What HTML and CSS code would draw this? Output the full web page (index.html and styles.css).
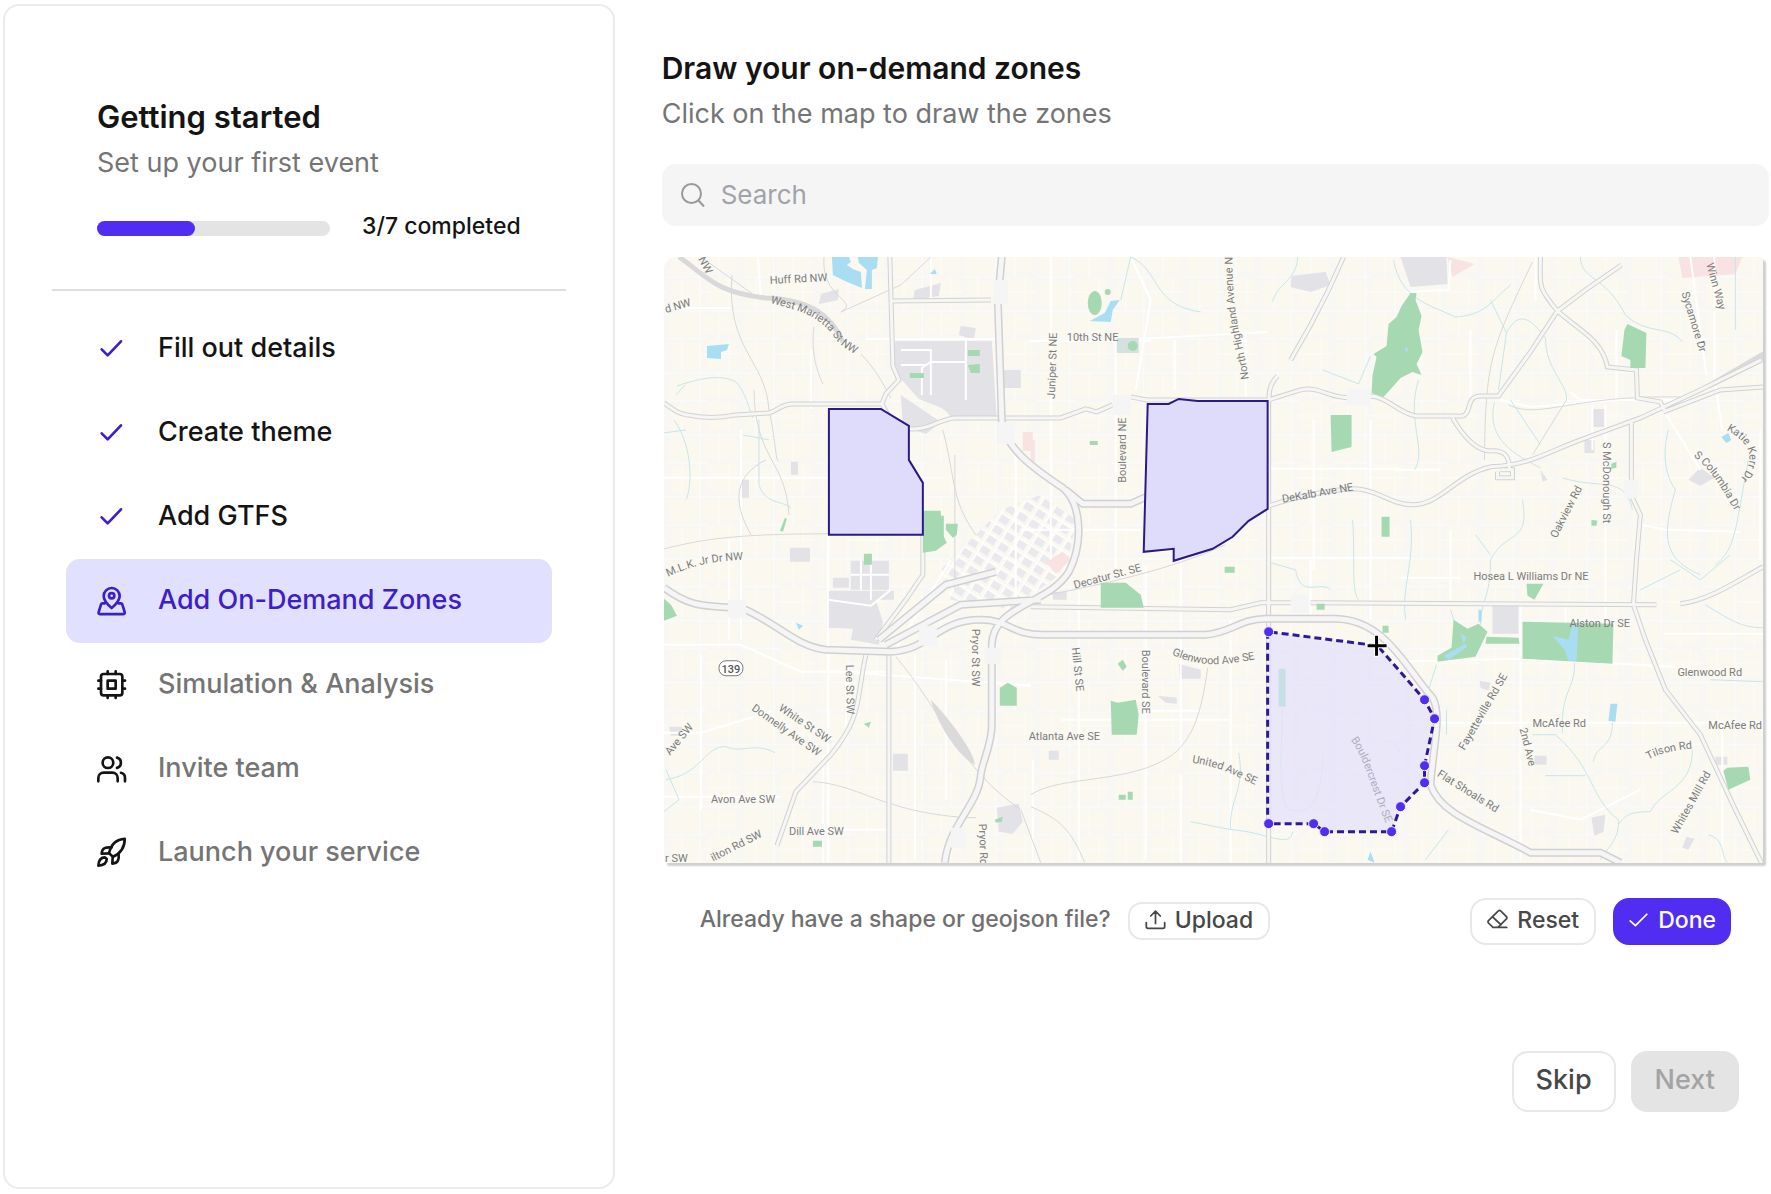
FILE: index.html
```html
<!DOCTYPE html>
<html lang="en">
<head>
<meta charset="utf-8">
<meta name="viewport" content="width=device-width, initial-scale=1">
<title>Getting started</title>
<link rel="stylesheet" href="styles.css">
</head>
<body>
<div class="page">
  <aside class="sidebar">
    <header class="intro">
      <h2 class="title">Getting started</h2>
      <p class="subtitle">Set up your first event</p>
      <div class="progress">
        <div class="progress-track" role="progressbar" aria-labelledby="progress-label" aria-valuemin="0" aria-valuemax="7" aria-valuenow="3"><div class="progress-fill" style="width: 42%"></div></div>
        <span class="progress-label" id="progress-label">3/7 completed</span>
      </div>
    </header>
    <hr class="divider">
    <nav class="steps" aria-label="Setup steps">
      <a class="step done" href="#details"><svg class="icon" viewBox="0 0 24 24"><path d="M5 13 9.500 17.500 19.500 7"/></svg>Fill out details</a>
      <a class="step done" href="#theme"><svg class="icon" viewBox="0 0 24 24"><path d="M5 13 9.500 17.500 19.500 7"/></svg>Create theme</a>
      <a class="step done" href="#gtfs"><svg class="icon" viewBox="0 0 24 24"><path d="M5 13 9.500 17.500 19.500 7"/></svg>Add GTFS</a>
      <a class="step active" href="#zones" aria-current="step"><svg class="icon" viewBox="0 0 24 24"><path d="M12.500 18C9.500 15.500 6.500 12.500 6.500 9a6 6 0 0 1 12 0C18.500 12.500 15.500 15.500 12.500 18Z"/><circle cx="12.500" cy="8.800" r="2"/><path d="M7.500 14.500H5.500a1 1 0 0 0-.9.6L2.700 21.200a1 1 0 0 0 1 1.400h17.600a1 1 0 0 0 1-1.400L20.400 15.100a1 1 0 0 0-.9-.6H17.500"/></svg>Add On-Demand Zones</a>
      <a class="step" href="#simulation"><svg class="icon" viewBox="0 0 24 24"><rect x="4.500" y="4.500" width="16" height="16" rx="2"/><path d="M9.500 9.500h6v6h-6zM9.500 2.500v2M15.500 2.500v2M9.500 20.500v2M15.500 20.500v2M20.500 9.500h2M20.500 15.500h2M2.500 9.500h2M2.500 15.500h2"/></svg>Simulation &amp; Analysis</a>
      <a class="step" href="#team"><svg class="icon" viewBox="0 0 24 24"><path d="M17 22v-2.500a4 4 0 0 0-4-4H6.500a4 4 0 0 0-4 4V22"/><circle cx="9.700" cy="8" r="4"/><path d="M22.500 22v-2.500a4 4 0 0 0-3-3.900M16.500 4.200a4 4 0 0 1 0 7.700"/></svg>Invite team</a>
      <a class="step" href="#launch"><svg class="icon" viewBox="0 0 24 24"><path d="M10.500 13C12 6.500 16 2.500 22.300 2.200 22.300 8 19 13 13.500 15.500Z"/><path d="M10.500 13 5 13.300c.1-2 .8-3.500 2.200-4.200 1.500-.7 3.500-.7 5.300-.5M13.300 15.500 13 20.700c2-.1 3.500-.8 4.200-2.200.7-1.500.7-3.500.5-5.200M7.500 16C4.500 16 2.700 18.500 2.500 22.200 6.200 22 8.800 20.300 8.800 17.300Z"/></svg>Launch your service</a>
    </nav>
  </aside>

  <main class="content">
    <h1 class="title">Draw your on-demand zones</h1>
    <p class="subtitle">Click on the map to draw the zones</p>
    <label class="search">
      <svg class="search-icon" viewBox="0 0 24 24"><circle cx="10.500" cy="10.500" r="9.500"/><path d="m17.500 17.500 5.500 6"/></svg>
      <input class="search-input" type="search" placeholder="Search" aria-label="Search">
    </label>

    <div class="map">
      <svg class="map-canvas" viewBox="663 257 1100 606" role="img" aria-label="Map of on-demand zones">
        <defs>
          <pattern id="blocks" width="74" height="62" patternUnits="userSpaceOnUse">
            <path class="block" d="M3 3h28v24H3zM36 4h34v20H36zM4 33h30v26H4zM40 30h30v28H40z"/>
            <path class="lane" d="M0 1h74M33 0v62M0 29h40M52 0v29M15 29v33M33 44h41M62 29v33"/>
          </pattern>
          <pattern id="downtown" width="14" height="12" patternUnits="userSpaceOnUse" patternTransform="rotate(32)">
            <path fill="#e9e9ee" d="M2 2h9v7H2z"/><path stroke="#fff" stroke-width="2" d="M0 0h14M0 0v12"/>
          </pattern>
          <path id="roads" d="M663 403C672 409 675 413 686 415C705 419 720 418 735 415L768 413C778 410 780 404 792 404H881L885 394 898 380 892 366 889 257M881 404C888 418 895 428 910 429C930 430 940 418 955 418H1060L1085 409 1096 412 1112 405M1130 397 1146 400H1268L1300 390C1320 386 1326 398 1350 398L1372 396C1388 398 1396 412 1415 416H1455C1475 420 1462 396 1480 396H1498L1530 352 1557 311 1585 290 1621 265M889 301 990 300M1343 257 1328 290 1310 325 1290 360M1277 376C1268 385 1269 392 1268 400V863M1540 257C1540 285 1536 286 1557 311C1578 330 1602 340 1607 367L1636 370 1637 398 1660 402 1664 410M1452 418C1462 435 1475 451 1490 451C1506 450 1509 458 1509 470M1268 506C1300 496 1330 490 1355 489C1378 490 1388 504 1412 505C1440 505 1455 475 1490 467C1530 465 1545 453 1580 440L1640 418 1700 390 1761 360M1631 420V480M1632 498 1640 515 1636 560 1633 605 1645 640 1665 690 1700 735 1735 810 1762 865M1663 412 1720 390 1763 387M1030 607 1230 610 1260 603H1290M1310 603 1656 605M1680 604C1710 600 1735 582 1763 567M922 520V575L905 600 875 640M888 652V863M865 655C855 700 862 716 830 755L795 792 776 846M1500 470H1512V478H1497V472"/>
          <path id="freeways" d="M663 588C685 604 695 607 740 608C775 622 795 647 825 650L890 652C930 650 935 620 980 620C1010 620 1010 636 1045 635H1205C1230 633 1240 619 1265 619H1335C1385 620 1405 668 1432 698C1442 715 1432 750 1430 785C1440 815 1480 826 1530 853H1600L1620 863M1001 257 997 300 1001 420C1003 448 1035 470 1062 488C1082 505 1082 545 1068 572C1048 605 992 605 991 645V725C991 745 982 760 980 775C978 805 948 825 944 863M878 640 945 585 995 572M885 645 960 605 1040 600M1065 490 1082 504 1130 504 1150 495"/>
          <path id="marietta" d="M769 303C805 312 820 318 834 338Q842 349 860 357"/>
          <path id="mlk" d="M667 577C690 566 710 561 745 560"/>
          <path id="highland" d="M1248 379C1245 350 1230 320 1232 250"/>
          <path id="katie" d="M1726 430C1752 444 1758 462 1734 486"/>
          <path id="columbia" d="M1693 456C1716 475 1720 488 1740 520"/>
          <path id="glenwood" d="M1171 655C1198 666 1215 668 1262 658"/>
          <path id="united" d="M1191 763C1225 768 1235 777 1265 790"/>
          <path id="boulder" d="M1350 740C1366 762 1370 790 1389 832"/>
          <path id="tilson" d="M1648 760Q1664 751 1692 749"/>
        </defs>

        <rect x="663" y="257" width="1100" height="606" fill="#f8f7f3"/>
        <rect x="663" y="257" width="1100" height="606" fill="url(#blocks)"/>
        <path fill="url(#downtown)" d="M1000 510 1040 495 1075 520 1066 570 1010 610 950 600 940 570Z"/>

        <g class="built">
          <path d="M894 341H991L996 418H950C945 405 925 404 917 398L894 372ZM900 395 940 422 925 434 902 426ZM827 591H893V600H875L882 622 878 645 850 640 852 629 827 628ZM850 561H888V590H850ZM832 578H848V588H832ZM789 548H809V562H789ZM820 294 838 289 837 300 818 304ZM914 290 940 283 938 296 912 300ZM960 326 975 328 973 340 958 335ZM1291 276 1325 272 1330 285 1310 292 1290 287ZM1400 257H1446L1447 284 1410 287ZM1492 606H1518V634H1492ZM1592 409H1604V427H1592ZM1584 440H1594V453H1584ZM1700 468 1714 478 1700 486 1688 480ZM1540 470 1547 480 1542 482ZM892 754H907V771H892ZM1178 664 1200 670V679H1179ZM1157 696 1176 698V704L1165 703ZM1048 751H1058V760H1048ZM1591 818 1605 815 1603 832 1594 836ZM1686 837 1694 839 1688 850 1682 848ZM790 462H797V475H790ZM740 480H748V498H740ZM668 727H681V736H670ZM1479 681 1490 683 1488 691 1480 688ZM1534 756H1546V765H1534ZM1715 757H1727V765H1715ZM1003 370H1020V388H1003ZM1052 592H1066V600H1052Z"/>
          <path d="M996 808 1018 804 1022 822 1012 834 998 832Z"/>
        </g>
        <path class="pink" d="M1022 432H1032V451H1022ZM1678 257H1742L1735 274 1682 278ZM1447 257 1474 264 1452 277ZM1045 562 1062 552 1070 560 1055 574ZM1030 440H1034V462H1030Z"/>

        <path class="street" d="M663 478H828M810 350V409M827 535V863M663 645 740 645 800 672H890M728 540V640M700 655V810M663 797H780M770 712 700 733H663M827 671 1030 686M890 657 950 560M790 830H888M822 756V863M1000 685H1030M1032 760V863M1078 590V860M1145 565V860M945 660V800M663 308H730M865 339H1000M760 300 757 257M1050 257V560M1115 340V570M1182 430H1267M1130 257 1150 300 1135 390M1174 340V390M1100 341 1267 332M1245 330V396M1313 420V570M1268 469H1400M1370 420V620M1268 558H1410M1145 711H1200M1180 560V760M1395 470 1440 470M1310 560V620M1520 605V850M1520 640V860M1390 662 1520 659 1620 664 1690 668M1400 723H1763M1570 392 1580 400H1700M1616 330V400M1592 405V450M1605 405V640M1565 605V660M1500 400 1530 407 1616 400M1714 257V378L1722 430M1660 405 1700 470M1690 257 1706 375M1640 525 1665 530 1740 532M1663 634H1763M1722 723V863M1400 578H1460M1530 810 1580 820 1640 790M1760 430V560M930 257V300M1028 341H1150M1020 530H1140M740 430V640M965 340V400M1470 330V400M1450 530V600M1535 257V300M1015 445V600M1060 720H1230M1180 775V863M1230 620V863M914 655V860M845 680V740M1450 260 1448 290 1405 292M900 350H930V395M900 365H925M921 395V368L930 362H965M827 600 870 606 890 590M860 561V590M870 561V600M850 575H888"/>

        <path class="water-line" d="M676 386C700 378 720 374 735 382C745 392 748 410 752 418M673 420C694 450 690 490 685 500M758 420V485C765 505 780 500 790 508M742 435 768 440M663 433 685 430M675 395 684 385M1130 257 1120 300M1130 257C1160 270 1150 305 1200 312M1297 257C1297 280 1275 285 1272 302M1322 370 1358 384 1370 356M1393 260C1400 300 1430 305 1455 317C1485 315 1490 302 1510 285M1490 300 1506 333 1498 390M1506 333C1518 310 1530 318 1545 338C1545 370 1568 385 1566 400M1580 257C1580 280 1605 275 1625 315C1645 335 1670 325 1682 342M1418 380C1405 420 1427 450 1414 470M1494 402C1485 440 1515 455 1540 468M1510 400 1540 445M1562 478C1600 490 1625 475 1632 510M1748 460C1735 530 1735 550 1715 565M1668 430C1660 460 1668 480 1675 490 1660 540 1665 560 1700 575M1735 257V330M1410 520C1415 560 1400 590 1405 620M1522 500C1530 545 1505 530 1490 560 1490 600 1480 600 1480 625M1475 535 1490 555M1352 520C1355 560 1350 590 1358 600M1270 563 1295 570C1300 600 1320 580 1330 590M1450 610 1455 625M1436 665 1428 690M1574 663C1575 690 1560 690 1562 733M1532 735H1555C1595 770 1590 800 1618 820 1620 840 1605 850 1600 860M1612 723C1612 750 1595 745 1593 762M1692 750C1692 790 1660 790 1650 812 1630 812 1625 815 1618 825M1545 776H1585M1640 590 1680 570M1670 560 1700 580 1730 555M1705 605C1730 620 1740 628 1763 628M1710 680 1763 682M665 780C700 775 705 745 725 747C740 754 755 742 774 753M665 770 678 800 663 812M1238 753C1245 790 1228 800 1230 830C1265 832 1290 850 1292 832M1190 822 1230 830M1282 708C1280 760 1278 800 1288 810 1320 820 1320 780 1323 755M1448 830 1425 860M1390 740 1400 752M1446 710V735M1708 835C1725 840 1720 855 1727 863"/>
        <path class="rail" d="M731 275C725 350 765 360 768 410C775 440 774 460 778 462M753 390C754 460 785 460 788 515M663 549C700 540 730 534 828 534M813 327C810 350 815 370 822 384M860 354C875 370 880 380 890 398M840 312 900 285 930 257M840 312C860 300 820 300 823 257M942 430C955 480 950 500 975 535M954 455V590M750 535C730 500 735 475 765 460M1042 596C1100 585 1170 570 1225 545M1207 668C1200 720 1190 740 1172 755C1130 785 1060 775 1030 795M1532 262C1490 350 1485 360 1484 460M1566 400 1532 455M1030 807C1060 820 1070 830 1084 863M895 657C940 710 960 770 1020 810L1040 863M812 782C860 785 880 812 965 818H975M700 257 760 300M1200 470 1150 495M1190 445 1208 465M1508 405C1540 420 1570 395 1680 397"/>
        <path class="yard" d="M678 257C705 275 712 292 765 298M765 298C810 300 830 315 842 342"/>
        <path fill="#dadada" d="M930 700C950 720 975 755 974 765C955 755 935 720 930 700ZM1700 388 1763 351V362L1710 388Z"/>

        <use class="road-case" href="#roads"/><use class="road-fill" href="#roads"/>
        <use class="freeway-case" href="#freeways"/><use class="freeway-fill" href="#freeways"/>
        <path class="junction" d="M993 280h14v24h-14zM996 422h18v22h-18zM1112 395h18v20h-18zM1346 389h24v16h-24zM1624 480h14v18h-14zM1290 595h18v18h-18zM727 600h18v18h-18zM918 626h18v20h-18zM984 648h16v16h-16zM950 828h14v20h-14z"/>

        <path class="park" d="M967 350h12v6h-12zM967 365 979 364V373H970ZM909 373h14v5h-14zM922 511H940V516H943V537L946 543 935 551 922 553ZM945 524H957L956 535 952 538 945 530ZM784 518 786 519 782 532 779 531ZM863 554h8v11h-8zM1089 441h8v4h-8zM1330 415H1351V447L1331 452ZM1381 517h8v20h-8zM1410 293H1416L1415 300 1421 316 1418 330 1422 352 1416 364 1421 375 1412 372 1400 378 1392 387 1383 397 1371 393 1372 375 1376 357 1373 354 1386 346 1388 324 1396 317 1401 306ZM1627 324 1646 333 1645 368H1630V360L1621 356 1624 330ZM663 599 670 605 676 616 663 621ZM999 688 1007 683 1016 688V706H999ZM863 724 870 722 868 728ZM812 841h9v6h-9zM994 820 1002 817 1001 822 995 823ZM1100 583H1125L1140 595 1143 608H1100ZM1110 701 1117 703 1135 700 1138 715 1136 735H1111ZM1117 664 1122 660 1126 667 1122 671ZM1118 795h7v5h-7zM1127 792h5v8h-5zM1224 567h10v6h-10zM1316 604h8v6h-8zM1382 626h6v7h-6zM1453 620 1467 629 1478 624 1487 632 1475 657 1437 662V656L1451 648ZM1486 637 1518 638 1519 644H1485ZM1522 622 1613 624 1612 664 1522 659ZM1526 584H1543L1534 600 1527 596ZM1723 771 1727 768 1748 767 1750 780 1728 790ZM1611 464 1616 462V468L1611 469ZM1591 520 1597 521 1596 526H1591Z"/>
        <ellipse class="park" cx="1094" cy="303" rx="7" ry="12"/><circle class="park" cx="1107" cy="292" r="3"/>
        <path fill="#d3e2de" d="M1116 338h22v15h-22z"/><circle class="park" cx="1132" cy="346" r="5"/>
        <path class="water" d="M831 257H848L850 262 846 265 852 269 860 272 861 288 844 281 832 275ZM857 257H877L876 268 871 270 871 289H864L866 270 858 263ZM706 346 728 344 726 350 720 352V359L706 358ZM934 269 936 274 929 274ZM1089 321 1104 313 1110 301 1119 300 1112 310 1110 322ZM1721 437 1728 433 1731 440 1726 443ZM1552 636 1568 640 1572 625H1578L1576 661H1568L1564 650ZM1610 704H1617L1615 722 1608 721ZM1367 860 1370 852 1374 863ZM1443 656 1465 644 1467 647 1448 660ZM1460 633 1466 638 1463 644ZM1404 350 1406 346 1408 352ZM795 623 802 626 798 630ZM1478 610H1481V622H1478Z"/>

        <g class="labels">
          <text x="769" y="284" transform="rotate(-3 769 284)">Huff Rd NW</text>
          <text x="697" y="259" transform="rotate(62 697 259)">NW</text>
          <text x="665" y="313" transform="rotate(-16 665 313)">d NW</text>
          <text><textPath href="#marietta">West Marietta St NW</textPath></text>
          <text><textPath href="#mlk">M.L.K. Jr Dr NW</textPath></text>
          <text x="1066" y="341">10th St NE</text>
          <text x="1054" y="399" transform="rotate(-88 1054 399)">Juniper St NE</text>
          <text><textPath href="#highland">North Highland Avenue N</textPath></text>
          <text x="1125" y="483" transform="rotate(-90 1125 483)">Boulevard NE</text>
          <text x="1282" y="503" transform="rotate(-10 1282 503)">DeKalb Ave NE</text>
          <text x="1706" y="264" transform="rotate(75 1706 264)">Winn Way</text>
          <text x="1681" y="293" transform="rotate(73 1681 293)">Sycamore Dr</text>
          <text><textPath href="#katie">Katie Kerr Dr</textPath></text>
          <text><textPath href="#columbia">S Columbia Dr</textPath></text>
          <text x="1603" y="442" transform="rotate(90 1603 442)">S McDonough St</text>
          <text x="1556" y="539" transform="rotate(-63 1556 539)">Oakview Rd</text>
          <text x="1473" y="580">Hosea L Williams Dr NE</text>
          <text x="1569" y="627">Alston Dr SE</text>
          <text x="1677" y="676">Glenwood Rd</text>
          <text x="1532" y="727">McAfee Rd</text>
          <text x="1708" y="729">McAfee Rd</text>
          <text x="1464" y="751" transform="rotate(-60 1464 751)">Fayetteville Rd SE</text>
          <text x="1519" y="729" transform="rotate(76 1519 729)">2nd Ave</text>
          <text><textPath href="#tilson">Tilson Rd</textPath></text>
          <text x="1677" y="835" transform="rotate(-61 1677 835)">Whites Mill Rd</text>
          <text x="1436" y="776" transform="rotate(32 1436 776)">Flat Shoals Rd</text>
          <text x="1074" y="589" transform="rotate(-15 1074 589)">Decatur St. SE</text>
          <text><textPath href="#glenwood">Glenwood Ave SE</textPath></text>
          <text x="1071" y="648" transform="rotate(84 1071 648)">Hill St SE</text>
          <text x="1141" y="650" transform="rotate(90 1141 650)">Boulevard SE</text>
          <text x="1028" y="740">Atlanta Ave SE</text>
          <text><textPath href="#united">United Ave SE</textPath></text>
          <text x="777" y="710" transform="rotate(34 777 710)">White St SW</text>
          <text x="750" y="710" transform="rotate(35 750 710)">Donnelly Ave SW</text>
          <text x="845" y="665" transform="rotate(89 845 665)">Lee St SW</text>
          <text x="971" y="629" transform="rotate(90 971 629)">Pryor St SW</text>
          <text x="710" y="803">Avon Ave SW</text>
          <text x="788" y="835">Dill Ave SW</text>
          <text x="669" y="756" transform="rotate(-50 669 756)">Ave SW</text>
          <text x="664" y="862">r SW</text>
          <text x="712" y="862" transform="rotate(-27 712 862)">ilton Rd SW</text>
          <text x="978" y="824" transform="rotate(88 978 824)">Pryor Rd</text>
        </g>
        <rect x="718" y="661" width="24" height="15" rx="7" fill="#fff" stroke="#777" stroke-width="1"/>
        <text class="shield" x="730" y="673">139</text>

        <path class="zone" d="M828 409H880L908 426V460L922 483V535H828Z"/>
        <path class="zone" d="M1147 404H1168L1178 399 1197 401H1267V509L1248 521 1232 537 1212 549 1173 561V549L1143 552Z"/>
        <path fill="#e6e2fa" fill-opacity=".78" d="M1268 632 1377 646 1424 700 1434 719 1424 766V783L1400 807 1391 832H1324L1313 824H1268Z"/>
        <text class="faded"><textPath href="#boulder">Bouldercrest Dr SE</textPath></text>
        <path fill="#c9dfe6" d="M1278 669h7v38h-7z"/>
        <path class="draft" d="M1267 632V824H1313L1324 832H1391L1400 807 1424 783V766L1434 719 1424 700 1377 646 1268 632"/>
        <g class="handles">
          <circle cx="1268" cy="632" r="5"/><circle cx="1424" cy="700" r="5"/><circle cx="1434" cy="719" r="5"/><circle cx="1424" cy="766" r="5"/><circle cx="1424" cy="783" r="5"/><circle cx="1400" cy="807" r="5"/><circle cx="1391" cy="832" r="5"/><circle cx="1324" cy="832" r="5"/><circle cx="1313" cy="824" r="5"/><circle cx="1268" cy="824" r="5"/>
        </g>
        <path d="M1366 646h21M1376 635v22" stroke="#fff" stroke-width="5"/><path d="M1367 646h19M1376 636v20" stroke="#000" stroke-width="3"/>
      </svg>
    </div>

    <div class="map-actions">
      <span class="hint">Already have a shape or geojson file?</span>
      <button class="btn upload" type="button"><svg class="btn-icon" viewBox="0 0 24 24"><path d="M12 16.500V2.500M6.500 8 12 2.500 17.500 8M1.500 15.500v4.500a2 2 0 0 0 2 2h17a2 2 0 0 0 2-2v-4.500"/></svg>Upload</button>
      <button class="btn reset" type="button"><svg class="btn-icon" viewBox="0 0 24 24"><path d="M22.500 21H6.800L1.700 16a1.800 1.800 0 0 1 0-2.600L13 2.200a1.800 1.800 0 0 1 2.600 0l6.600 6.600a1.800 1.800 0 0 1 0 2.600L12.600 21M6.300 8.900 16 18"/></svg>Reset</button>
      <button class="btn confirm" type="button"><svg class="btn-icon" viewBox="0 0 24 24"><path d="M2.500 13.500 8.500 19 21.500 6"/></svg>Done</button>
    </div>
    <div class="page-actions">
      <button class="btn large" type="button">Skip</button>
      <button class="btn large" type="button" disabled>Next</button>
    </div>
  </main>
</div>
</body>
</html>
```
FILE: styles.css
```css
* { box-sizing: border-box; }

body {
  margin: 0;
  background: #fff;
  color: #141414;
  font-family: Inter, "Liberation Sans", sans-serif;
}

.page {
  display: flex;
  gap: 47px;
  min-height: 100vh;
  padding: 4px 2px 5px 3px;
}

.sidebar {
  flex: 0 0 611px;
  padding: 93px 47px 40px;
  border: 2px solid #ebebeb;
  border-radius: 16px;
}

.intro { padding: 0 45px; }

.title {
  margin: 0;
  font-size: 30px;
  line-height: 36px;
  font-weight: 600;
}

.intro .title { font-size: 31px; }

.subtitle {
  margin: 10px 0 0;
  font-size: 27px;
  line-height: 36px;
  color: #757575;
}

.progress {
  display: flex;
  align-items: center;
  gap: 32px;
  margin-top: 31px;
}

.progress-track {
  flex: 0 0 233px;
  height: 15px;
  border-radius: 8px;
  background: #e4e4e4;
}

.progress-fill {
  height: 15px;
  border-radius: 8px;
  background: #512df2;
}

.progress-label {
  padding-bottom: 4px;
  font-size: 23px;
  line-height: 28px;
  font-weight: 500;
  white-space: nowrap;
}

.divider {
  margin: 45px 0 16px;
  border: 0;
  border-top: 2px solid #dedede;
}

.steps {
  display: flex;
  flex-direction: column;
  padding: 0 14px;
}

.step {
  display: flex;
  align-items: center;
  gap: 31px;
  height: 84px;
  padding: 0 29px 3px;
  border-radius: 14px;
  color: #757575;
  font-size: 27px;
  font-weight: 500;
  text-decoration: none;
}

.step.done { color: #141414; }
.step.active { background: #e1e0fe; color: #3c20c5; }

.icon {
  flex: none;
  width: 32px;
  height: 32px;
  fill: none;
  stroke: #141414;
  stroke-width: 2;
  stroke-linecap: round;
  stroke-linejoin: round;
}

.step.done .icon,
.step.active .icon { stroke: #3c20c5; }

.content {
  flex: 1;
  min-width: 0;
  padding-top: 46px;
}

.search {
  display: flex;
  align-items: center;
  gap: 16px;
  height: 62px;
  margin-top: 32px;
  padding: 0 19px;
  border-radius: 14px;
  background: #f5f5f6;
}

.search-icon {
  flex: none;
  width: 24px;
  height: 24px;
  fill: none;
  stroke: #999;
  stroke-width: 2;
}

.search-input {
  flex: 1;
  min-width: 0;
  padding: 0;
  border: 0;
  outline: 0;
  background: transparent;
  font: 26px/36px Inter, "Liberation Sans", sans-serif;
}

.search-input::placeholder { color: #a0a3a8; }

.map {
  margin: 31px 6px 0 2px;
  overflow: hidden;
  border-radius: 12px 4px 2px 2px;
  box-shadow: 3px 3px 2px #cfcfcf;
}

.map-canvas {
  display: block;
  width: 100%;
  height: auto;
  fill: none;
}

.block { fill: #faf8ef; }
.lane { stroke: #fcfcfa; stroke-width: 1; }
.built { fill: #e2e2e7; }
.pink { fill: #f8e2e2; }
.street { stroke: #fff; stroke-width: 2; }
.water-line { stroke: #c8e5ea; stroke-width: 1; }
.rail { stroke: #d8d8d8; stroke-width: 1; }
.yard { stroke: #d9d9d9; stroke-width: 5; }
.road-case { stroke: #d2d2d2; stroke-width: 5; }
.road-fill { stroke: #f6f6f5; stroke-width: 3; }
.freeway-case { stroke: #d0d0d0; stroke-width: 8; }
.freeway-fill { stroke: #f5f5f5; stroke-width: 5; }
.junction { fill: #f5f5f5; }
.park { fill: #a6d8b2; }
.water { fill: #a9def2; }

.labels,
.faded {
  fill: #7c7c7c;
  font: 11px Roboto, "Liberation Sans", sans-serif;
}

.faded { fill: #b0adc0; }

.shield {
  fill: #555;
  font: 500 11px Roboto, "Liberation Sans", sans-serif;
  text-anchor: middle;
}

.zone { fill: #dfdcfb; stroke: #2b1a84; stroke-width: 2; }
.draft { stroke: #2f1a94; stroke-width: 3; stroke-dasharray: 7 4; }
.handles { fill: #512df2; stroke: #f3f1fb; stroke-width: 1; }

.map-actions {
  display: flex;
  align-items: center;
  gap: 17px;
  margin-top: 35px;
  padding: 0 38px;
}

.hint {
  padding-bottom: 4px;
  font-size: 23px;
  line-height: 28px;
  font-weight: 500;
  color: #707070;
}

.btn {
  display: flex;
  align-items: center;
  justify-content: center;
  gap: 9px;
  height: 47px;
  padding: 0 15px 3px;
  border: 2px solid #e8e8e8;
  border-radius: 16px;
  background: #fff;
  color: #474747;
  font-family: inherit;
  font-size: 23px;
  font-weight: 500;
  white-space: nowrap;
}

.btn-icon {
  flex: none;
  width: 21px;
  height: 21px;
  fill: none;
  stroke: currentColor;
  stroke-width: 2;
  stroke-linecap: round;
  stroke-linejoin: round;
}

.upload {
  height: 38px;
  border-radius: 14px;
}

.reset { margin-left: auto; }

.confirm {
  padding: 0 13px 3px;
  border-color: #512df2;
  background: #512df2;
  color: #fff;
}

.page-actions {
  display: flex;
  justify-content: flex-end;
  gap: 15px;
  margin-top: 106px;
  padding-right: 30px;
}

.large {
  height: 61px;
  padding: 0 22px 3px;
  font-size: 27px;
}

.large:disabled {
  border-color: #e4e4e4;
  background: #e4e4e4;
  color: #a3a3a3;
}
```
